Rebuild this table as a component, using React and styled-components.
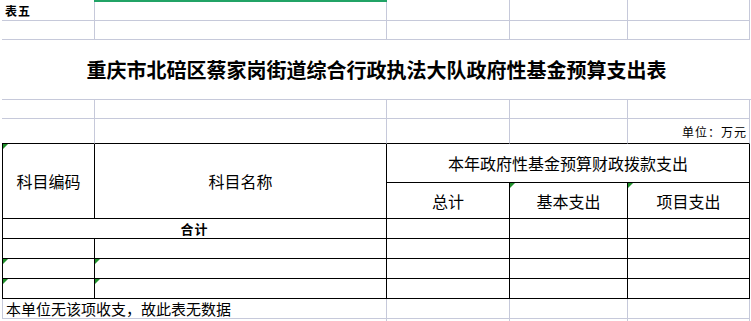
import React from 'react'
import styled, { createGlobalStyle } from 'styled-components'

const GRID = '#c6c9da'
const INK = '#000'

const GlobalStyle = createGlobalStyle`
    html, body {
        margin: 0;
        padding: 0;
        background: #fff;
    }
    body {
        font-family: "Noto Sans CJK SC", "Noto Sans", sans-serif;
        color: #000;
    }
`;

const Sheet = styled.div`
    box-sizing: border-box;
    width: 751px;
    height: 321px;
    padding-left: 2px;
    overflow: hidden;
    display: grid;
    grid-template-columns: 93px 292px 123px 118px 122px 1fr;
    grid-template-rows: 21px 19px 60px 19px 25px 39px 36px 20px 20px 20px 20px 20px 1fr;
`;

const Cell = styled.div`
    box-sizing: border-box;
    position: relative;
    min-width: 0;
    display: flex;
    align-items: center;
    justify-content: ${({ $align }) => $align || 'center'};
    grid-column: span ${({ $span }) => $span || 1};
    grid-row: span ${({ $rows }) => $rows || 1};
    border-left: ${({ $left }) => ($left ? `1px solid ${$left}` : '0')};
    border-right: ${({ $right }) => ($right === 'none' ? '0' : `1px solid ${$right || GRID}`)};
    border-bottom: ${({ $bottom }) => ($bottom === 'none' ? '0' : `1px solid ${$bottom || GRID}`)};
    white-space: nowrap;

    ${({ $flag }) => $flag && `
        &::before {
            content: '';
            position: absolute;
            top: 0;
            left: 0;
            border-top: 5px solid #1f8f2a;
            border-right: 5px solid transparent;
        }
    `}

    ${({ $active }) => $active && `
        &::after {
            content: '';
            position: absolute;
            top: 0;
            left: -1px;
            right: -1px;
            height: 2px;
            background: #21a366;
        }
    `}
`;

const TableCell = styled(Cell).attrs(({ $right, $bottom }) => ({
    $right: $right || INK,
    $bottom: $bottom || INK,
}))``;

const SheetLabel = styled.span`
    padding-left: 3px;
    font-size: 12px;
    font-weight: 700;
    letter-spacing: 1px;
`;

const Title = styled.h1`
    margin: 0;
    font-size: 20px;
    font-weight: 700;
    line-height: 1;
`;

const Unit = styled.span`
    padding-right: 2px;
    font-size: 12px;
    letter-spacing: 1px;
`;

const HeadText = styled.span`
    font-size: 16px;
    line-height: 1;
`;

const TotalText = styled.span`
    font-size: 13px;
    font-weight: 700;
    letter-spacing: 1px;
`;

const Note = styled.span`
    padding-left: 3px;
    font-size: 15px;
    line-height: 1;
`;

const Spacer = styled(Cell).attrs({ $right: 'none', $bottom: 'none' })``;

const dataRows = [
    { flag: false },
    { flag: true },
    { flag: true },
]

const App = () => (
    <>
        <GlobalStyle />
        <Sheet>
            {/* row 1 */}
            <Cell $align="flex-start"><SheetLabel>表五</SheetLabel></Cell>
            <Cell $active />
            <Cell />
            <Cell />
            <Cell />
            <Spacer />

            {/* row 2 */}
            <Cell />
            <Cell />
            <Cell />
            <Cell />
            <Cell />
            <Spacer />

            {/* title */}
            <Cell $span={6} $right="none">
                <Title>重庆市北碚区蔡家岗街道综合行政执法大队政府性基金预算支出表</Title>
            </Cell>

            {/* row 4 */}
            <Cell />
            <Cell />
            <Cell />
            <Cell />
            <Cell />
            <Spacer />

            {/* unit row */}
            <Cell $bottom={INK} />
            <Cell $bottom={INK} />
            <Cell $bottom={INK} />
            <Cell $bottom={INK} />
            <Cell $bottom={INK} $align="flex-end"><Unit>单位：万元</Unit></Cell>
            <Spacer />

            {/* header */}
            <TableCell $rows={2} $left={INK} $flag><HeadText>科目编码</HeadText></TableCell>
            <TableCell $rows={2}><HeadText>科目名称</HeadText></TableCell>
            <TableCell $span={3}><HeadText>本年政府性基金预算财政拨款支出</HeadText></TableCell>
            <Spacer />
            <TableCell><HeadText>总计</HeadText></TableCell>
            <TableCell $flag><HeadText>基本支出</HeadText></TableCell>
            <TableCell $flag><HeadText>项目支出</HeadText></TableCell>
            <Spacer />

            {/* total */}
            <TableCell $span={2} $left={INK}><TotalText>合计</TotalText></TableCell>
            <TableCell />
            <TableCell />
            <TableCell />
            <Spacer />

            {dataRows.map((row, i) => (
                <React.Fragment key={i}>
                    <TableCell $left={INK} $flag={row.flag} />
                    <TableCell $flag={row.flag} />
                    <TableCell />
                    <TableCell />
                    <TableCell />
                    <Spacer />
                </React.Fragment>
            ))}

            {/* note */}
            <Cell $span={2} $left={GRID} $align="flex-start"><Note>本单位无该项收支，故此表无数据</Note></Cell>
            <Cell />
            <Cell />
            <Cell />
            <Spacer />

            {/* tail */}
            <Cell $span={2} $bottom="none" />
            <Cell $bottom="none" />
            <Cell $bottom="none" />
            <Cell $bottom="none" />
            <Spacer />
        </Sheet>
    </>
)

export default App
